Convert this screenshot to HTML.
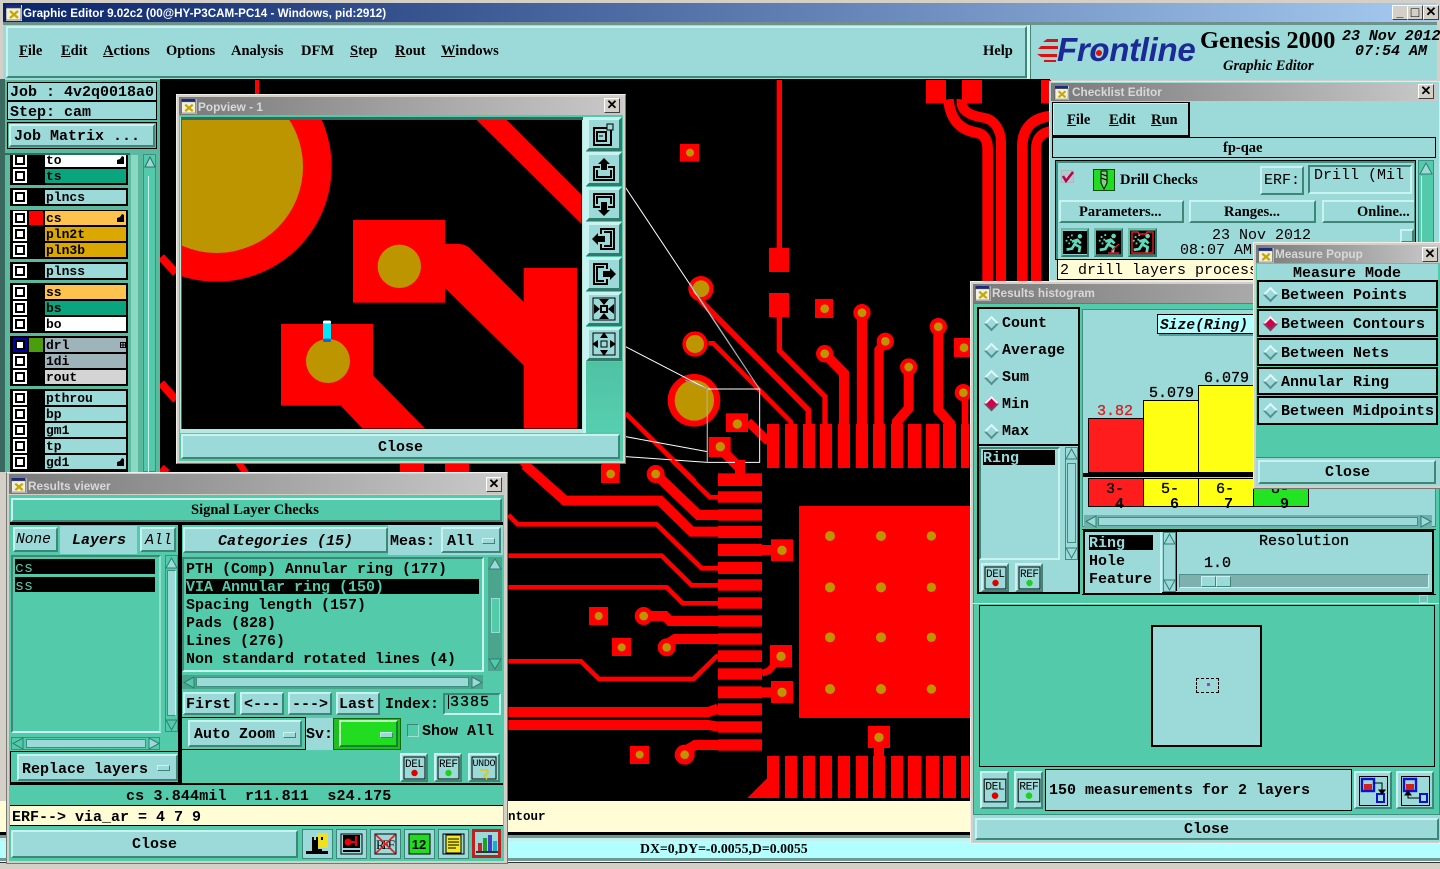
<!DOCTYPE html>
<html><head><meta charset="utf-8"><title>Graphic Editor</title>
<style>
html,body{margin:0;padding:0;width:1440px;height:869px;overflow:hidden;background:#d4d0c8}
div,span,svg{position:absolute;box-sizing:border-box}
.t,.m,.n,.s,.w{white-space:pre;line-height:1;color:#000;margin-top:1px}
.m{font:bold 15px/15px "Liberation Mono",monospace}
.n{font:15px/15px "Liberation Mono",monospace}
.s{font:bold 14.5px/15px "Liberation Serif",serif}
.i{font-style:italic}
span.ul{position:static;text-decoration:underline}
.w{font:bold 11.8px/12px "Liberation Sans",sans-serif;color:#d8d8d8}
.b{background:#9cd9d9;border:2px solid;border-color:#c9f3f0 #3f8578 #3f8578 #c9f3f0}
.f{background:#9cd9d9}
.g{background:#53cbab}
.k{background:#000}
.bar{background:linear-gradient(90deg,#7a7a7a,#c9c9c9)}
.win{background:#d4d0c8;border:1px solid #f0eee8;border-right-color:#777;border-bottom-color:#777}
.x{width:16px;height:15px;background:#d4d0c8;border:1px solid;border-color:#fff #404040 #404040 #fff;font:bold 13px/12px "Liberation Sans",sans-serif;text-align:center;color:#000}
.r{left:45px;width:81px;height:14px;font:bold 13px/16px "Liberation Mono",monospace;padding-left:1px;white-space:pre;overflow:hidden}
.grp{left:10px;width:118px;background:#000;border:1px solid #000}
.c{left:13px;width:14px;height:14px;background:#fff}
.c:after{content:"";position:absolute;box-sizing:border-box;left:2px;top:2px;width:10px;height:10px;border:2px solid #000;background:#fff}
.d{width:11px;height:11px;transform:rotate(45deg);background:#9cd9d9;border:2px solid;border-color:#e0f8f8 #56908e #56908e #e0f8f8}
.d.on{background:#d0004c;border-color:#f4f4f4 #7a4060 #7a4060 #f4f4f4}
.mr{left:1257px;width:181px;height:28px;background:#9cd9d9;border:2px solid #000}
</style></head><body>
<svg width="0" height="0" style="left:0;top:0"><defs>
<symbol id="wi" viewBox="0 0 16 16"><rect width="16" height="16" fill="#e8e8e8"/><rect x="0" y="0" width="15" height="3" fill="#1a2a80"/><rect x="0" y="3" width="15" height="12" fill="#f0f0e0" stroke="#444" stroke-width=".6"/><path d="M4 6l8 7M12 6l-8 7" stroke="#c8a800" stroke-width="2.4"/></symbol>
<symbol id="del" viewBox="0 0 28 30"><rect x="4" y="4" width="21" height="22" fill="none" stroke="#000"/><text x="14.5" y="14" font-family="Liberation Mono,monospace" font-size="11" text-anchor="middle" textLength="19">DEL</text><circle cx="14.5" cy="20" r="3.2" fill="#e00000"/></symbol>
<symbol id="ref" viewBox="0 0 28 30"><rect x="4" y="4" width="21" height="22" fill="none" stroke="#000"/><text x="14.5" y="14" font-family="Liberation Mono,monospace" font-size="11" text-anchor="middle" textLength="19">REF</text><circle cx="14.5" cy="20" r="3.2" fill="#20d020"/></symbol>
<symbol id="pbb" viewBox="0 0 36 34"><g stroke="none"><rect width="36" height="34" fill="#2f7a6a"/><path d="M0 0H36L33 3H3V31L0 34Z" fill="#c9f3f0"/><rect x="3" y="3" width="30" height="28" fill="#9cd9d9"/></g></symbol>
<symbol id="man" viewBox="0 0 27 26"><rect width="27" height="26" fill="#000"/><g fill="none" stroke="#62d8b8" stroke-width="3"><path d="M17 9l-4 6 6 3-1 6M13 15l-3 5-6 1M16 10l-6 2M16 10l4 4"/></g><circle cx="19" cy="6" r="2.5" fill="#62d8b8"/><path d="M5 6h2v2H5zM8 9h2v2H8zM3 10h2v2H3zM6 13h2v2H6zM9 4h2v2H9z" fill="#62d8b8"/></symbol>
</defs></svg>

<!-- top title -->
<div style="left:3px;top:3px;width:1434px;height:19px;background:linear-gradient(90deg,#0a246a,#a6caf0)"></div>
<svg style="left:6px;top:5px" width="16" height="16"><use href="#wi"/></svg>
<div class="w" style="left:23px;top:7px;color:#fff;font-size:11.65px">Graphic Editor 9.02c2 (00@HY-P3CAM-PC14 - Windows, pid:2912)</div>
<div class="x" style="left:1392px;top:5px;font-size:12px">_</div>
<div class="x" style="left:1407px;top:5px;font-size:14px">□</div>
<div class="x" style="left:1423px;top:5px">✕</div>
<div style="left:3px;top:22px;width:1434px;height:3px;background:#6f918c"></div>
<div style="left:3px;top:25px;width:1434px;height:55px;background:#9cd9d9"></div>
<div class="b" style="left:6px;top:26px;width:1021px;height:52px"></div>
<div style="left:1027px;top:25px;width:4px;height:54px;background:#d8f4f2;border-right:1px solid #3f8578"></div>
<div class="s" style="left:19px;top:43px"><span class="ul">F</span>ile</div>
<div class="s" style="left:61px;top:43px"><span class="ul">E</span>dit</div>
<div class="s" style="left:103px;top:43px"><span class="ul">A</span>ctions</div>
<div class="s" style="left:166px;top:43px">Options</div>
<div class="s" style="left:231px;top:43px">Analysis</div>
<div class="s" style="left:301px;top:43px">DFM</div>
<div class="s" style="left:350px;top:43px"><span class="ul">S</span>tep</div>
<div class="s" style="left:395px;top:43px"><span class="ul">R</span>out</div>
<div class="s" style="left:441px;top:43px"><span class="ul">W</span>indows</div>
<div class="s" style="left:983px;top:43px">Help</div>

<!-- logo -->
<svg style="left:1037px;top:38px" width="22" height="26"><path d="M10 1h11v3H6zM4 8h17v3H1zM0 16h20v3H4zM7 22h12v2H7z" fill="#e01010"/></svg>
<div style="left:1057px;top:33px;font:italic bold 33px/34px 'Liberation Sans',sans-serif;color:#1b2a96;white-space:pre;letter-spacing:-.3px">Frontline</div>
<div style="left:1096px;top:50px;width:6px;height:6px;background:#e01010;border-radius:3px"></div>
<div style="left:1200px;top:27px;font:bold 24.5px/28px 'Liberation Serif',serif;white-space:pre;color:#000">Genesis 2000</div>
<div class="s i" style="left:1223px;top:58px">Graphic Editor</div>
<div class="m i" style="left:1342px;top:28px;letter-spacing:-.05px">23 Nov 2012</div>
<div class="m i" style="left:1355px;top:43px">07:54 AM</div>

<!-- main canvas -->
<div class="k" style="left:160px;top:79px;width:890px;height:722px"></div>
<svg style="left:0;top:0" width="1440" height="869" fill="#f00">
<g stroke="#f00" fill="none">
<path d="M161 257L176 273M161 383L176 400M161 468L167 473" stroke-width="8"/>
</g>
<rect x="255" y="80" width="4" height="14"/>
<path d="M235 463h8l6 9h-8zM519 463h8l8 9h-8z"/>
<rect x="400" y="463" width="24" height="9"/><rect x="445" y="463" width="24" height="9"/><rect x="602" y="463" width="18" height="9"/>
<!-- zoom 9 -->
<g transform="translate(900,76) scale(.33333)">
<rect x="78" y="12" width="60" height="70"/><rect x="186" y="12" width="60" height="70"/><rect x="423" y="12" width="30" height="70"/>
<g fill="none" stroke="#f00">
<path d="M145 70C150 120 170 160 230 170C255 175 263 195 263 220L263 620" stroke-width="32"/>
<path d="M185 70C180 110 220 120 250 125C285 130 303 165 303 200L303 620" stroke-width="30"/>
<path d="M455 120C395 125 367 160 367 210L367 620" stroke-width="32"/>
<path d="M455 165C420 170 408 190 408 220L408 620" stroke-width="30"/>
</g></g>
<!-- zoom 7 -->
<g transform="translate(505,80) scale(.33333)">
<rect x="525" y="192" width="57" height="53"/>
<rect x="792" y="504" width="60" height="72"/><rect x="792" y="639" width="60" height="72"/><rect x="815" y="0" width="16" height="505"/>
<rect x="930" y="657" width="54" height="57"/><rect x="1347" y="774" width="50" height="57"/>
<rect x="663" y="1000" width="66" height="56"/><rect x="611" y="1071" width="66" height="60"/>
<g fill="none" stroke="#f00">
<path d="M823 711V812L960 950V1040" stroke-width="16"/>
<path d="M1071 698V1040" stroke-width="31"/>
<path d="M1141 784L1122 810V1040" stroke-width="28"/>
<path d="M1300 740V990L1335 1030V1040" stroke-width="30"/>
<path d="M1211 861V985L1176 1025V1040" stroke-width="30"/>
<path d="M959 821L1017 880V1040" stroke-width="30"/>
<path d="M1380 938V1040" stroke-width="20"/>
<path d="M585 660L910 990V1040" stroke-width="17"/>
<path d="M610 790H625L857 1025V1040" stroke-width="14"/>
<path d="M729 1025L790 1085" stroke-width="26"/>
<path d="M660 1120L705 1165V1190" stroke-width="30"/>
<path d="M362 1000L570 1205" stroke-width="14"/>
</g>
<g><circle cx="1071" cy="698" r="26"/><circle cx="1141" cy="784" r="26"/><circle cx="1300" cy="740" r="26"/><circle cx="1211" cy="861" r="26"/><circle cx="959" cy="821" r="26"/><circle cx="1375" cy="938" r="26"/><circle cx="588" cy="626" r="38"/><circle cx="570" cy="792" r="38"/><circle cx="567" cy="961" r="79"/></g>
<g><rect x="786" y="1032" width="36" height="132"/><rect x="840" y="1032" width="36" height="132"/><rect x="894" y="1032" width="36" height="132"/><rect x="945" y="1032" width="36" height="132"/><rect x="999" y="1032" width="36" height="132"/><rect x="1053" y="1032" width="36" height="132"/><rect x="1104" y="1032" width="36" height="132"/><rect x="1158" y="1032" width="36" height="132"/><rect x="1209" y="1032" width="40" height="132"/><rect x="1263" y="1032" width="40" height="132"/><rect x="1314" y="1032" width="39" height="132"/><rect x="1368" y="1032" width="24" height="132"/></g>
<g fill="#bd9500"><circle cx="555" cy="218" r="12"/><circle cx="959" cy="686" r="13"/><circle cx="1377" cy="803" r="13"/><circle cx="1071" cy="698" r="13"/><circle cx="1141" cy="784" r="13"/><circle cx="1300" cy="740" r="13"/><circle cx="1211" cy="861" r="13"/><circle cx="959" cy="821" r="13"/><circle cx="1375" cy="938" r="13"/><circle cx="588" cy="626" r="25"/><circle cx="570" cy="792" r="27"/><ellipse cx="568" cy="961" rx="59" ry="61"/><circle cx="697" cy="1032" r="14"/><circle cx="646" cy="1100" r="14"/></g>
<g fill="none" stroke="#fff" stroke-width="3"><path d="M362 323L762 925M362 800L607 927M362 1070L607 1115M362 1130L607 1147M607 927H764V1147H607Z"/></g>
<g fill="none" stroke="#999" stroke-width="3"><path d="M555 610L762 925M540 900L607 927V1147"/></g>
</g>
<!-- zoom 8 -->
<g transform="translate(505,460) scale(.33333)">
<g fill="none" stroke="#f00">
<path d="M60 15L180 122H465L560 215H640" stroke-width="30"/>
<path d="M452 42L580 165H640" stroke-width="30"/>
<path d="M10 165L38 193H455L590 325H640" stroke-width="14"/>
<path d="M10 287H470L560 376H640" stroke-width="14"/>
<path d="M10 382H485L533 430H640" stroke-width="14"/>
<path d="M500 0L615 112H640" stroke-width="14"/>
<path d="M705 0V40" stroke-width="30"/>
<path d="M416 468H480L495 483H640" stroke-width="30"/>
<path d="M490 550L510 537H640" stroke-width="30"/>
<path d="M10 604H228L282 657H565L639 585" stroke-width="14"/>
<path d="M10 756H610L639 746" stroke-width="30"/>
<path d="M10 795H610L639 800" stroke-width="30"/>
<path d="M545 870L570 855H640" stroke-width="30"/>
<path d="M771 640L792 632L828 590" stroke-width="20"/>
<path d="M771 270H800M771 697H800M1122 860V890" stroke-width="30"/>
</g>
<rect x="639" y="40" width="132" height="38"/><rect x="639" y="94" width="132" height="34"/><rect x="639" y="148" width="132" height="34"/><rect x="639" y="198" width="132" height="36"/><rect x="639" y="252" width="132" height="36"/><rect x="639" y="306" width="132" height="36"/><rect x="639" y="358" width="132" height="34"/><rect x="639" y="412" width="132" height="34"/><rect x="639" y="466" width="132" height="34"/><rect x="639" y="520" width="132" height="34"/><rect x="639" y="571" width="132" height="35"/><rect x="639" y="625" width="132" height="34"/><rect x="639" y="679" width="132" height="36"/><rect x="639" y="730" width="132" height="35"/><rect x="639" y="784" width="132" height="34"/><rect x="639" y="838" width="132" height="34"/>
<rect x="288" y="14" width="56" height="55"/><rect x="252" y="441" width="57" height="54"/><rect x="321" y="534" width="57" height="54"/><rect x="375" y="858" width="57" height="54"/>
<rect x="798" y="238" width="66" height="65"/><rect x="795" y="555" width="66" height="66"/><rect x="798" y="663" width="66" height="66"/><rect x="1089" y="798" width="66" height="66"/>
<rect x="882" y="138" width="515" height="636"/>
<circle cx="452" cy="42" r="27"/><circle cx="416" cy="468" r="27"/><circle cx="485" cy="562" r="27"/><circle cx="539" cy="884" r="30"/>
<g transform="translate(0,-144)"><rect x="786" y="1032" width="36" height="126"/><rect x="840" y="1032" width="36" height="126"/><rect x="894" y="1032" width="36" height="126"/><rect x="945" y="1032" width="36" height="126"/><rect x="999" y="1032" width="36" height="126"/><rect x="1053" y="1032" width="36" height="126"/><rect x="1104" y="1032" width="36" height="126"/><rect x="1158" y="1032" width="36" height="126"/><rect x="1209" y="1032" width="40" height="126"/><rect x="1263" y="1032" width="40" height="126"/><rect x="1314" y="1032" width="39" height="126"/><rect x="1368" y="1032" width="24" height="126"/></g>
<path d="M727 1014L786 955V1014Z"/>
<g fill="#bd9500"><circle cx="317" cy="42" r="13"/><circle cx="452" cy="42" r="13"/><circle cx="281" cy="468" r="12"/><circle cx="416" cy="468" r="13"/><circle cx="350" cy="562" r="12"/><circle cx="485" cy="562" r="13"/><circle cx="404" cy="884" r="12"/><circle cx="539" cy="884" r="13"/><circle cx="831" cy="271" r="14"/><circle cx="828" cy="589" r="14"/><circle cx="831" cy="697" r="14"/><circle cx="1122" cy="832" r="14"/>
<circle cx="975" cy="228" r="15"/><circle cx="1128" cy="228" r="15"/><circle cx="1279" cy="228" r="14"/><circle cx="975" cy="382" r="15"/><circle cx="1128" cy="382" r="15"/><circle cx="1279" cy="382" r="14"/><circle cx="975" cy="532" r="15"/><circle cx="1128" cy="532" r="15"/><circle cx="1279" cy="532" r="14"/><circle cx="975" cy="687" r="15"/><circle cx="1128" cy="687" r="15"/><circle cx="1279" cy="687" r="14"/></g>
</g>
</svg>

<!-- bottom bars -->
<div style="left:0;top:801px;width:1440px;height:31px;background:#fffcd6"></div>
<div class="t" style="left:508px;top:809px;font:bold 12.5px/14px 'Liberation Mono',monospace">ntour</div>
<div class="k" style="left:0;top:832px;width:1440px;height:3px"></div>
<div style="left:0;top:835px;width:1440px;height:3px;background:#6f9a94"></div>
<div style="left:0;top:838px;width:1440px;height:3px;background:#c6f0ee"></div>
<div style="left:0;top:841px;width:1440px;height:17px;background:#b3ffff"></div>
<div style="left:0;top:858px;width:1440px;height:3px;background:#6f9a94"></div>
<div style="left:0;top:861px;width:1440px;height:1px;background:#fff"></div>
<div style="left:0;top:862px;width:1440px;height:1px;background:#333"></div>
<div style="left:0;top:863px;width:1440px;height:6px;background:#d4d0c8"></div>
<div class="s" style="left:640px;top:840px;font-size:13.8px">DX=0,DY=-0.0055,D=0.0055</div>

<!-- left panel -->
<div style="left:0;top:79px;width:5px;height:393px;background:#39695f"></div>
<div class="g" style="left:5px;top:80px;width:155px;height:392px;background:#5ab99e"></div>
<div style="left:131px;top:155px;width:7px;height:317px;background:#8ad8c2"></div>
<div class="g" style="left:143px;top:154px;width:13px;height:318px;border:1px solid #3f8f80"></div>
<div style="left:148px;top:176px;width:1px;height:296px;background:#c9f3f0"></div>
<svg style="left:144px;top:156px" width="12" height="12"><path d="M6 1L1 11H11Z" fill="#9cd9d9" stroke="#2f6f60"/></svg>

<div class="grp" style="top:155px;height:30px"></div>
<div class="c" style="top:153px"></div><div class="r" style="top:155px;height:12px;line-height:12px;background:#fff">to</div>
<div class="c" style="top:169px"></div><div class="r" style="top:169px;background:#0aa57e">ts</div>
<svg style="left:116px;top:156px" width="9" height="9"><path d="M1 8V4L4 3 6 0 8 1V8Z"/></svg>
<div class="grp" style="top:188px;height:18px"></div>
<div class="c" style="top:190px"></div><div class="r" style="top:190px;background:#9cd9d9">plncs</div>
<div class="grp" style="top:210px;height:49px"></div>
<div class="c" style="top:211px"></div><div style="left:29px;top:211px;width:14px;height:14px;background:#f00"></div><div class="r" style="top:211px;background:#fec24e">cs</div>
<svg style="left:116px;top:214px" width="9" height="9"><path d="M1 8V4L4 3 6 0 8 1V8Z"/></svg>
<div class="c" style="top:227px"></div><div class="r" style="top:227px;background:#daa800">pln2t</div>
<div class="c" style="top:243px"></div><div class="r" style="top:243px;background:#daa800">pln3b</div>
<div class="grp" style="top:262px;height:18px"></div>
<div class="c" style="top:264px"></div><div class="r" style="top:264px;background:#9cd9d9">plnss</div>
<div class="grp" style="top:283px;height:50px"></div>
<div class="c" style="top:285px"></div><div class="r" style="top:285px;background:#fec24e">ss</div>
<div class="c" style="top:301px"></div><div class="r" style="top:301px;background:#0aa57e">bs</div>
<div class="c" style="top:317px"></div><div class="r" style="top:317px;background:#fff">bo</div>
<div class="grp" style="top:336px;height:50px"></div>
<div class="c" style="top:338px;background:#0000b0"></div><div style="left:29px;top:338px;width:14px;height:14px;background:#4a9e0e"></div><div class="r" style="top:338px;background:#9fb4ba">drl</div>
<svg style="left:120px;top:342px" width="6" height="6"><path d="M.5.5h5v5h-5zM3 0v6M0 3h6" fill="none" stroke="#000"/></svg>
<div class="c" style="top:354px"></div><div class="r" style="top:354px;background:#9fb4ba">1di</div>
<div class="c" style="top:370px"></div><div class="r" style="top:370px;background:#d4d4d4">rout</div>
<div class="grp" style="top:389px;height:83px"></div>
<div class="c" style="top:391px"></div><div class="r" style="top:391px;background:#9cd9d9">pthrou</div>
<div class="c" style="top:407px"></div><div class="r" style="top:407px;background:#9cd9d9">bp</div>
<div class="c" style="top:423px"></div><div class="r" style="top:423px;background:#9cd9d9">gm1</div>
<div class="c" style="top:439px"></div><div class="r" style="top:439px;background:#9cd9d9">tp</div>
<div class="c" style="top:455px"></div><div class="r" style="top:455px;background:#9cd9d9">gd1</div>
<svg style="left:116px;top:458px" width="9" height="9"><path d="M1 8V4L4 3 6 0 8 1V8Z"/></svg>
<div style="left:5px;top:149px;width:125px;height:6px;background:#5ab99e;border-bottom:2px solid #2f6f60"></div>
<div class="f" style="left:7px;top:82px;width:150px;height:19px;border:1px solid #000"></div>
<div class="m" style="left:10px;top:84px">Job : 4v2q0018a0</div>
<div class="f" style="left:7px;top:101px;width:150px;height:19px;border:1px solid #000"></div>
<div class="m" style="left:10px;top:104px">Step: cam</div>
<div class="b" style="left:9px;top:124px;width:146px;height:23px"></div>
<div class="m" style="left:14px;top:128px">Job Matrix ...</div>
<div style="left:7px;top:122px;width:150px;height:27px;border:1px solid #000"></div>

<!-- Popview -->
<div class="win" style="left:176px;top:94px;width:450px;height:370px"></div>
<div class="bar" style="left:179px;top:97px;width:444px;height:18px"></div>
<svg style="left:181px;top:99px" width="16" height="15"><use href="#wi"/></svg>
<div class="w" style="left:198px;top:100px">Popview - 1</div>
<div class="x" style="left:604px;top:98px">✕</div>
<div class="g" style="left:179px;top:115px;width:444px;height:346px"></div>
<div style="left:180px;top:117px;width:406px;height:316px;background:#b5e8de"></div>
<div style="left:181px;top:117px;width:404px;height:3px;background:#2f6f60"></div>
<div style="left:181px;top:117px;width:1px;height:312px;background:#2f6f60"></div>
<svg style="left:182px;top:120px" width="400" height="309" viewBox="182 120 400 309">
<rect x="182" y="120" width="400" height="309" fill="#000"/>
<g transform="translate(175,90) scale(.33333)" fill="#f00">
<circle cx="125" cy="230" r="345"/><circle cx="125" cy="230" r="259" fill="#bd9500"/>
<path d="M905 90H995L1220 315V402Z"/>
<rect x="534" y="390" width="276" height="248"/>
<path d="M810 462H850Q875 462 890 480L1046 636V534H1206V1015H1046V826L810 594Z"/>
<circle cx="673" cy="529" r="65" fill="#bd9500"/>
<rect x="318" y="702" width="276" height="245"/>
<path d="M594 856L750 1015H562L497 947Z"/>
<circle cx="459" cy="813" r="66" fill="#bd9500"/>
<rect x="444" y="692" width="24" height="62" rx="6" fill="#00e8f8"/>
<rect x="444" y="692" width="24" height="8" rx="4" fill="#fff"/>
<rect x="444" y="746" width="24" height="10" rx="4" fill="#2060d0"/>
</g></svg>
<div style="left:583px;top:117px;width:3px;height:316px;background:#c9f3f0"></div>
<div style="left:586px;top:362px;width:36px;height:70px;background:linear-gradient(#4fc2a4,#57cfaf)"></div>
<svg style="left:586px;top:117px" width="36" height="246" fill="none" stroke="#000" stroke-width="2">
<use href="#pbb" width="36" height="34"/><use href="#pbb" y="35" width="36" height="34"/><use href="#pbb" y="70" width="36" height="34"/><use href="#pbb" y="105" width="36" height="34"/><use href="#pbb" y="140" width="36" height="34"/><use href="#pbb" y="175" width="36" height="34"/><use href="#pbb" y="210" width="36" height="34"/>
<g><rect x="8" y="11" width="17" height="17" stroke-width="2"/><rect x="11" y="15" width="9" height="9" stroke-width="2"/><rect x="21" y="7" width="6" height="6" stroke-width="1" fill="#9cd9d9"/><path d="M13 19h4" stroke-width="1"/></g>
<g transform="translate(0,35)"><path d="M14 15H8v13h20V15h-6"/><path d="M11 18v7h14v-7"/><path d="M18 6l6 6h-3v6h-6v-6h-3z" fill="#000" stroke="none"/></g>
<g transform="translate(0,70)"><path d="M14 20H8V7h20v13h-6"/><path d="M11 17v-7h14v7"/><path d="M18 29l-6-6h3v-8h6v8h3z" fill="#000" stroke="none"/></g>
<g transform="translate(0,105)"><path d="M15 12V7h13v20H15v-5"/><path d="M18 10h7v14h-7"/><path d="M6 17l6-6v3h7v6h-7v3z" fill="#000" stroke="none"/></g>
<g transform="translate(0,140)"><path d="M21 12V7H8v20h13v-5"/><path d="M18 10h-7v14h7"/><path d="M30 17l-6-6v3h-7v6h7v3z" fill="#000" stroke="none"/></g>
<g transform="translate(0,175)"><rect x="7" y="6" width="22" height="22" stroke-width="1"/><rect x="15" y="14" width="6" height="6"/><path d="M18 13l-5-6h10zM18 21l-5 6h10zM14 17l-6-5v10zM22 17l6-5v10z" fill="#000" stroke="none"/></g>
<g transform="translate(0,210)"><rect x="7" y="6" width="22" height="22" stroke-width="1"/><rect x="15" y="14" width="6" height="6" stroke-width="1"/><path d="M18 5l-4 6h8zM18 29l-4-6h8zM6 17l6-4v8zM30 17l-6-4v8z" fill="#000" stroke="none"/></g>
</svg>
<div class="b" style="left:181px;top:434px;width:439px;height:25px"></div>
<div class="m" style="left:378px;top:439px">Close</div>

<!-- Results viewer -->
<div style="left:6px;top:472px;width:502px;height:392px;background:#d4d0c8;border:1px solid #777;border-top-color:#f0f0f0"></div>
<div class="bar" style="left:9px;top:474px;width:496px;height:20px"></div>
<svg style="left:11px;top:478px" width="16" height="15"><use href="#wi"/></svg>
<div class="w" style="left:28px;top:479px">Results viewer</div>
<div class="x" style="left:486px;top:477px">✕</div>
<div class="g" style="left:9px;top:495px;width:495px;height:366px"></div>
<div class="g" style="left:11px;top:498px;width:491px;height:24px;border:2px solid;border-color:#c9f3f0 #3f8578 #3f8578 #c9f3f0"></div>
<div class="s" style="left:191px;top:502px">Signal Layer Checks</div>
<div class="k" style="left:10px;top:522px;width:493px;height:3px"></div>
<div class="b" style="left:13px;top:527px;width:45px;height:25px"></div><div class="n i" style="left:16px;top:532px;font-size:14.5px">None</div>
<div class="f" style="left:60px;top:526px;width:77px;height:28px"></div><div class="m i" style="left:72px;top:532px">Layers</div>
<div class="b" style="left:140px;top:527px;width:36px;height:25px"></div><div class="n i" style="left:145px;top:532px">All</div>
<div class="k" style="left:178px;top:525px;width:4px;height:258px"></div>
<div class="b" style="left:183px;top:527px;width:205px;height:26px"></div><div class="m i" style="left:218px;top:533px">Categories (15)</div>
<div class="f" style="left:388px;top:525px;width:115px;height:30px"></div>
<div class="m" style="left:390px;top:533px">Meas:</div>
<div class="b" style="left:441px;top:527px;width:60px;height:26px"></div><div class="m" style="left:447px;top:533px">All</div>
<div class="b" style="left:482px;top:538px;width:13px;height:6px;border-width:1px"></div>
<!-- layers list -->
<div style="left:11px;top:555px;width:150px;height:178px;border:2px solid;border-color:#3f8578 #8fe0cc #c9f3f0 #3f8578"></div>
<div class="k" style="left:15px;top:559px;width:140px;height:15px"></div><div class="n" style="left:15px;top:560px;color:#53cbab">cs</div>
<div class="k" style="left:15px;top:577px;width:140px;height:15px"></div><div class="n" style="left:15px;top:578px;color:#53cbab">ss</div>
<div style="left:165px;top:555px;width:13px;height:177px;border:1px solid #3f8f80"></div>
<div style="left:167px;top:570px;width:9px;height:146px;border:1px solid #3f8f80;background:#9cd9d9;border-right-color:#c9f3f0"></div>
<svg style="left:165px;top:556px" width="13" height="176"><path d="M6.5 2L1 12H12Z" fill="#9cd9d9" stroke="#2f7f70"/><path d="M6.5 174L1 164H12Z" fill="#53cbab" stroke="#2f7f70"/></svg>
<div style="left:11px;top:737px;width:149px;height:13px;border:1px solid #3f8f80"></div>
<div style="left:26px;top:739px;width:120px;height:9px;background:#9cd9d9;border:1px solid #3f8f80"></div>
<svg style="left:12px;top:737px" width="148" height="13"><path d="M1 6.5L11 1V12Z" fill="#53cbab" stroke="#2f7f70"/><path d="M147 6.5L137 1V12Z" fill="#9cd9d9" stroke="#2f7f70"/></svg>
<div class="k" style="left:10px;top:751px;width:170px;height:33px"></div>
<div class="g" style="left:11px;top:752px;width:167px;height:30px"></div>
<div class="b" style="left:17px;top:754px;width:161px;height:27px"></div>
<div class="m" style="left:22px;top:761px">Replace layers</div>
<div class="b" style="left:157px;top:765px;width:13px;height:6px;border-width:1px"></div>
<!-- categories -->
<div style="left:182px;top:557px;width:302px;height:115px;border:2px solid;border-color:#3f8578 #c9f3f0 #c9f3f0 #3f8578"></div>
<div class="m" style="left:186px;top:561px">PTH (Comp) Annular ring (177)</div>
<div class="k" style="left:186px;top:579px;width:293px;height:15px"></div>
<div class="m" style="left:186px;top:579px;color:#53cbab">VIA Annular ring (150)</div>
<div class="m" style="left:186px;top:597px">Spacing length (157)</div>
<div class="m" style="left:186px;top:615px">Pads (828)</div>
<div class="m" style="left:186px;top:633px">Lines (276)</div>
<div class="m" style="left:186px;top:651px">Non standard rotated lines (4)</div>
<div style="left:488px;top:557px;width:14px;height:114px;background:#4aa58c"></div>
<div style="left:491px;top:598px;width:9px;height:35px;background:#53cbab;border:1px solid #9cd9d9"></div>
<svg style="left:488px;top:557px" width="14" height="114"><path d="M7 2L1 12H13Z" fill="#9cd9d9" stroke="#2f7f70"/><path d="M7 112L1 102H13Z" fill="#53cbab" stroke="#2f7f70"/></svg>
<div style="left:182px;top:675px;width:301px;height:14px;background:#4aa58c"></div>
<div style="left:196px;top:677px;width:273px;height:10px;background:#9cd9d9;border:1px solid #3f8f80"></div>
<svg style="left:183px;top:676px" width="300" height="13"><path d="M1 6.5L11 1V12Z" fill="#53cbab" stroke="#2f7f70"/><path d="M299 6.5L289 1V12Z" fill="#9cd9d9" stroke="#2f7f70"/></svg>
<div class="b" style="left:183px;top:692px;width:53px;height:23px"></div><div class="m" style="left:186px;top:696px">First</div>
<div class="b" style="left:240px;top:692px;width:44px;height:23px"></div><div class="m" style="left:244px;top:696px">&lt;---</div>
<div class="b" style="left:288px;top:692px;width:44px;height:23px"></div><div class="m" style="left:292px;top:696px">---&gt;</div>
<div class="b" style="left:336px;top:692px;width:44px;height:23px"></div><div class="m" style="left:339px;top:696px">Last</div>
<div class="m" style="left:385px;top:696px">Index:</div>
<div style="left:443px;top:693px;width:58px;height:22px;border:2px solid;border-color:#3f8578 #c9f3f0 #c9f3f0 #3f8578"></div>
<div class="n" style="left:450px;top:694px;letter-spacing:1px;-webkit-text-stroke:.3px #000">3385</div>
<div class="k" style="left:448px;top:695px;width:1px;height:14px"></div>
<div class="k" style="left:181px;top:717px;width:125px;height:33px"></div>
<div class="g" style="left:182px;top:718px;width:123px;height:31px"></div>
<div class="b" style="left:188px;top:720px;width:114px;height:27px"></div>
<div class="m" style="left:194px;top:726px">Auto Zoom</div>
<div class="b" style="left:283px;top:732px;width:13px;height:6px;border-width:1px"></div>
<div class="f" style="left:306px;top:718px;width:27px;height:32px"></div>
<div class="m" style="left:306px;top:726px">Sv:</div>
<div style="left:333px;top:718px;width:68px;height:32px;background:#1fbf1f;border:1px solid #0d6d0d"></div>
<div style="left:339px;top:720px;width:59px;height:27px;background:#22dc22;border:2px solid;border-color:#b8f3b8 #157f30 #157f30 #b8f3b8"></div>
<div class="b" style="left:380px;top:732px;width:13px;height:6px;border-width:1px"></div>
<div style="left:407px;top:724px;width:12px;height:13px;border:1px solid #3f8578;border-right-color:#9ce4d2;border-bottom-color:#9ce4d2"></div>
<div class="m" style="left:422px;top:723px">Show All</div>
<div class="b" style="left:400px;top:753px;width:28px;height:29px"></div><svg style="left:400px;top:753px" width="28" height="30"><use href="#del"/></svg>
<div class="b" style="left:434px;top:753px;width:28px;height:29px"></div><svg style="left:434px;top:753px" width="28" height="30"><use href="#ref"/></svg>
<div class="b" style="left:468px;top:753px;width:32px;height:29px"></div>
<svg style="left:468px;top:753px" width="32" height="30"><rect x="4" y="4" width="24" height="22" fill="none" stroke="#000"/><text x="16" y="13" font-family="Liberation Mono,monospace" font-size="10" text-anchor="middle" textLength="23">UNDO</text><path d="M12 17h7q2 2 0 4l-3 2 3 3" fill="none" stroke="#e8c800" stroke-width="1.6"/></svg>
<div class="k" style="left:10px;top:783px;width:493px;height:2px"></div>
<div class="m" style="left:126px;top:788px;letter-spacing:.15px">cs 3.844mil  r11.811  s24.175</div>
<div class="k" style="left:10px;top:805px;width:493px;height:1px"></div>
<div style="left:10px;top:806px;width:493px;height:20px;background:#fffcd6;border-bottom:1px solid #000"></div>
<div class="m" style="left:12px;top:809px">ERF--&gt; via_ar = 4 7 9</div>
<div class="b" style="left:11px;top:830px;width:287px;height:28px"></div>
<div class="m" style="left:132px;top:836px">Close</div>
<svg style="left:302px;top:829px" width="200" height="31">
<g fill="#9cd9d9" stroke="#3f8578"><rect x=".5" y=".5" width="30" height="29"/><rect x="34.5" y=".5" width="30" height="29"/><rect x="68.5" y=".5" width="30" height="29"/><rect x="102.5" y=".5" width="30" height="29"/><rect x="136.5" y=".5" width="30" height="29"/></g>
<rect x="4" y="4" width="22" height="16" fill="#9cd9d9"/><rect x="15" y="4" width="11" height="15" fill="#f0e020"/><path d="M4 22h22v3H4zM10 20h10v2H10zM10 8h6v12h-6z"/><rect x="12" y="8" width="2" height="3" fill="#9cd9d9"/><rect x="19" y="8" width="2" height="3"/>
<rect x="39" y="5" width="21" height="20" fill="none" stroke="#000"/><rect x="41" y="6" width="17" height="13" fill="#000"/><circle cx="46" cy="13" r="3.5" fill="#e00"/><path d="M49 13h4M54 7v10" stroke="#e00" stroke-width="2"/><path d="M41 22h17" stroke="#000" stroke-width="2"/>
<rect x="73" y="5" width="21" height="20" fill="none" stroke="#000"/><text x="83.5" y="20" font-family="Liberation Serif,serif" font-size="13" text-anchor="middle" textLength="19">REF</text><path d="M74 6l19 18M93 6L74 24" stroke="#e02020" stroke-width="1.6"/>
<rect x="107" y="5" width="21" height="20" fill="#22dc22" stroke="#000"/><text x="117" y="20" font-family="Liberation Sans,sans-serif" font-size="13" font-weight="bold" text-anchor="middle">12</text>
<rect x="141" y="5" width="21" height="20" fill="none" stroke="#000"/><rect x="144" y="6" width="15" height="18" fill="#f4e820" stroke="#000"/><path d="M146 10h11M146 13h11M146 16h11M146 19h8" stroke="#000"/>
<rect x="171.5" y="1.5" width="26" height="26" fill="#9cd9d9" stroke="#c02020" stroke-width="3"/><rect x="176" y="14" width="4" height="8" fill="#d02020"/><rect x="181" y="9" width="4" height="13" fill="#20a020"/><rect x="186" y="6" width="4" height="16" fill="#4040d0"/><rect x="191" y="12" width="4" height="10" fill="#10b0d0"/><path d="M174 23h22" stroke="#000" stroke-width="1.5"/>
</svg>

<!-- Checklist editor -->
<div class="f" style="left:1049px;top:81px;width:391px;height:200px;border:1px solid #e8e8e0"></div>
<div class="bar" style="left:1051px;top:83px;width:387px;height:18px"></div>
<svg style="left:1054px;top:86px" width="16" height="14"><use href="#wi"/></svg>
<div class="w" style="left:1072px;top:85px">Checklist Editor</div>
<div class="x" style="left:1418px;top:84px">✕</div>
<div style="left:1052px;top:102px;width:138px;height:35px;border:1px solid #000;border-right-width:2px;border-bottom-width:2px;box-shadow:inset 1px 1px 0 #c9f3f0"></div>
<div class="s" style="left:1067px;top:112px"><span class="ul">F</span>ile</div>
<div class="s" style="left:1109px;top:112px"><span class="ul">E</span>dit</div>
<div class="s" style="left:1151px;top:112px"><span class="ul">R</span>un</div>
<div style="left:1052px;top:137px;width:384px;height:21px;border:1px solid #000"></div>
<div class="s" style="left:1223px;top:140px">fp-qae</div>
<div class="g" style="left:1055px;top:160px;width:361px;height:100px;border:1px solid #000;background:#3f8f80"></div>
<div class="f" style="left:1058px;top:163px;width:356px;height:97px"></div>
<div style="left:1061px;top:170px;width:13px;height:13px;background:#b8c8cc;border:1px solid #a0c0c0"></div>
<svg style="left:1061px;top:170px" width="14" height="13"><path d="M2 6l3 5 7-9" fill="none" stroke="#b8004c" stroke-width="2.5"/></svg>
<div style="left:1093px;top:169px;width:22px;height:22px;background:#22dc22;border:1px solid #0a4a0a"></div>
<svg style="left:1093px;top:169px" width="22" height="22"><path d="M8 2h6v12l-3 6-3-6z" fill="#80d080" stroke="#000"/><path d="M8 5l6 2M8 9l6 2" stroke="#000"/></svg>
<div class="s" style="left:1120px;top:172px">Drill Checks</div>
<div class="b" style="left:1260px;top:166px;width:44px;height:29px"></div>
<div class="n" style="left:1264px;top:172px">ERF:</div>
<div style="left:1308px;top:165px;width:104px;height:29px;border:2px solid;border-color:#3f8578 #c9f3f0 #c9f3f0 #3f8578"></div>
<div class="n" style="left:1314px;top:167px">Drill (Mil</div>
<div class="b" style="left:1059px;top:200px;width:125px;height:23px"></div><div class="s" style="left:1079px;top:204px">Parameters...</div>
<div class="b" style="left:1189px;top:200px;width:127px;height:23px"></div><div class="s" style="left:1224px;top:204px">Ranges...</div>
<div class="b" style="left:1322px;top:200px;width:92px;height:23px;border-right:0"></div><div class="s" style="left:1357px;top:204px">Online...</div>
<div style="left:1061px;top:228px;width:28px;height:29px;border:2px solid;border-color:#62c0a8 #2f7a6a #2f7a6a #62c0a8"></div>
<div style="left:1094px;top:228px;width:29px;height:29px;border:2px solid;border-color:#62c0a8 #2f7a6a #2f7a6a #62c0a8"></div>
<div style="left:1128px;top:228px;width:29px;height:29px;border:2px solid;border-color:#62c0a8 #2f7a6a #2f7a6a #62c0a8"></div>
<svg style="left:1063px;top:230px" width="24" height="25"><use href="#man"/></svg>
<svg style="left:1096px;top:230px" width="25" height="25"><use href="#man"/><path d="M15 21l8-7M12 23h11" stroke="#e02020" stroke-width="1.4" fill="none"/></svg>
<svg style="left:1130px;top:230px" width="25" height="25"><use href="#man"/><path d="M2 2h6l1 2h7l1-2h6v21H2z" fill="none" stroke="#e02020" stroke-width="1.4"/></svg>
<div class="n" style="left:1212px;top:227px">23 Nov 2012</div>
<div class="n" style="left:1180px;top:242px">08:07 AM</div>
<div class="b" style="left:1400px;top:229px;width:14px;height:14px"></div>
<div style="left:1418px;top:160px;width:16px;height:121px;background:#53cbab;border:1px solid #3f8f80"></div>
<div style="left:1421px;top:176px;width:9px;height:105px;background:#53cbab;border-left:1px solid #c9f3f0"></div>
<svg style="left:1419px;top:162px" width="14" height="14"><path d="M7 1L1 12H13Z" fill="#9cd9d9" stroke="#2f7f70"/></svg>
<div style="left:1057px;top:259px;width:360px;height:21px;background:#fffcd6;border:1px solid #000"></div>
<div class="n" style="left:1060px;top:262px">2 drill layers process</div>

<!-- Results histogram -->
<div style="left:970px;top:281px;width:470px;height:563px;background:#d4d0c8;border:1px solid #f0eee8"></div>
<div class="bar" style="left:973px;top:284px;width:467px;height:19px"></div>
<svg style="left:975px;top:286px" width="16" height="15"><use href="#wi"/></svg>
<div class="w" style="left:992px;top:286px;color:#d8d8d8">Results histogram</div>
<div class="g" style="left:973px;top:303px;width:467px;height:512px;border:1px solid #3f8f80"></div>
<div class="f" style="left:977px;top:307px;width:103px;height:287px;border:2px solid #000"></div>
<div class="k" style="left:977px;top:444px;width:103px;height:2px"></div>
<div class="d" style="left:986px;top:318px"></div><div class="m" style="left:1002px;top:315px">Count</div>
<div class="d" style="left:986px;top:345px"></div><div class="m" style="left:1002px;top:342px">Average</div>
<div class="d" style="left:986px;top:372px"></div><div class="m" style="left:1002px;top:369px">Sum</div>
<div class="d on" style="left:986px;top:398px"></div><div class="m" style="left:1002px;top:396px">Min</div>
<div class="d" style="left:986px;top:426px"></div><div class="m" style="left:1002px;top:423px">Max</div>
<div style="left:979px;top:447px;width:81px;height:113px;border:2px solid;border-color:#3f8578 #c9f3f0 #c9f3f0 #3f8578"></div>
<div class="k" style="left:983px;top:450px;width:72px;height:15px"></div>
<div class="m" style="left:983px;top:450px;color:#9cd9d9">Ring</div>
<div style="left:1065px;top:447px;width:13px;height:113px;border:1px solid #3f8f80"></div>
<div style="left:1067px;top:463px;width:9px;height:80px;border:1px solid #3f8f80"></div>
<svg style="left:1065px;top:447px" width="13" height="113"><path d="M6.5 2L1 12H12Z" fill="#9cd9d9" stroke="#2f7f70"/><path d="M6.5 111L1 101H12Z" fill="#9cd9d9" stroke="#2f7f70"/></svg>
<div class="b" style="left:981px;top:563px;width:28px;height:29px"></div><svg style="left:981px;top:563px" width="28" height="30"><use href="#del"/></svg>
<div class="b" style="left:1015px;top:563px;width:28px;height:29px"></div><svg style="left:1015px;top:563px" width="28" height="30"><use href="#ref"/></svg>
<!-- chart -->
<div class="f" style="left:1082px;top:309px;width:354px;height:218px;border:1px solid #3f8f80"></div>
<div style="left:1157px;top:314px;width:100px;height:20px;background:#b3ffff;border:1px solid #000;box-shadow:2px 2px 0 #5a9a9a"></div>
<div class="m i" style="left:1160px;top:318px;font-size:14.5px;letter-spacing:.1px">Size(Ring)</div>
<div style="left:1088px;top:418px;width:56px;height:55px;background:#ff1c1c;border:1px solid #000"></div>
<div style="left:1143px;top:400px;width:56px;height:73px;background:#ffff14;border:1px solid #000"></div>
<div style="left:1198px;top:385px;width:56px;height:88px;background:#ffff14;border:1px solid #000"></div>
<div class="k" style="left:1083px;top:473px;width:172px;height:4px"></div>
<div class="m" style="left:1097px;top:403px;color:#d82020;font-weight:normal;-webkit-text-stroke:.3px #d82020">3.82</div>
<div class="n" style="left:1149px;top:385px;-webkit-text-stroke:.3px #000">5.079</div>
<div class="n" style="left:1204px;top:370px;-webkit-text-stroke:.3px #000">6.079</div>
<div style="left:1088px;top:478px;width:56px;height:29px;background:#ff1c1c;border:1px solid #000"></div>
<div style="left:1143px;top:478px;width:56px;height:29px;background:#ffff14;border:1px solid #000"></div>
<div style="left:1198px;top:478px;width:56px;height:29px;background:#ffff14;border:1px solid #000"></div>
<div style="left:1253px;top:478px;width:56px;height:29px;background:#22e422;border:1px solid #000"></div>
<div class="n" style="left:1106px;top:481px;-webkit-text-stroke:.3px #000">3-</div><div class="m" style="left:1115px;top:496px">4</div>
<div class="n" style="left:1161px;top:481px;-webkit-text-stroke:.3px #000">5-</div><div class="m" style="left:1170px;top:496px">6</div>
<div class="n" style="left:1216px;top:481px;-webkit-text-stroke:.3px #000">6-</div><div class="m" style="left:1224px;top:496px">7</div>
<div class="n" style="left:1271px;top:481px;-webkit-text-stroke:.3px #000">8-</div><div class="m" style="left:1280px;top:496px">9</div>
<div style="left:1084px;top:515px;width:348px;height:13px;background:#6fb0ac"></div>
<div style="left:1098px;top:517px;width:320px;height:9px;background:#9cd9d9;border:1px solid #3f8f80"></div>
<svg style="left:1085px;top:515px" width="347" height="13"><path d="M1 6.5L11 1V12Z" fill="#9cd9d9" stroke="#2f7f70"/><path d="M346 6.5L336 1V12Z" fill="#9cd9d9" stroke="#2f7f70"/></svg>
<div class="k" style="left:1082px;top:529px;width:354px;height:1px"></div>
<div class="f" style="left:1083px;top:530px;width:351px;height:64px;border:2px solid #000"></div>
<div style="left:1085px;top:532px;width:77px;height:61px;border-right:2px solid #c9f3f0;background:#9cd9d9"></div>
<div class="k" style="left:1089px;top:535px;width:64px;height:15px"></div>
<div class="m" style="left:1089px;top:535px;color:#9cd9d9">Ring</div>
<div class="m" style="left:1089px;top:553px">Hole</div>
<div class="m" style="left:1089px;top:571px">Feature</div>
<div style="left:1163px;top:532px;width:13px;height:60px;border:1px solid #3f8f80"></div>
<svg style="left:1163px;top:532px" width="13" height="60"><path d="M6.5 2L1 12H12Z" fill="#9cd9d9" stroke="#2f7f70"/><path d="M6.5 58L1 48H12Z" fill="#9cd9d9" stroke="#2f7f70"/></svg>
<div class="k" style="left:1176px;top:531px;width:1px;height:60px"></div>
<div class="m" style="left:1259px;top:533px;font-weight:normal;-webkit-text-stroke:.3px #000">Resolution</div>
<div class="m" style="left:1204px;top:555px;font-weight:normal;-webkit-text-stroke:.3px #000">1.0</div>
<div style="left:1179px;top:574px;width:250px;height:14px;background:#7fb0b0;border:1px solid #4f8f8a;border-bottom-color:#c9f3f0;border-right-color:#c9f3f0"></div>
<div class="b" style="left:1201px;top:576px;width:15px;height:11px;border-width:1px"></div>
<div class="b" style="left:1216px;top:576px;width:15px;height:11px;border-width:1px"></div>
<div class="k" style="left:1082px;top:594px;width:354px;height:1px"></div>
<div style="left:1419px;top:595px;width:9px;height:8px;background:#6fc4b4;border:1px solid #9cd9d9"></div>
<!-- lower map -->
<div style="left:973px;top:603px;width:466px;height:1px;background:#c9f3f0"></div>
<div class="g" style="left:979px;top:605px;width:456px;height:162px;border:1px solid #000"></div>
<div class="f" style="left:1151px;top:625px;width:111px;height:122px;border:2px solid #000"></div>
<div style="left:1196px;top:678px;width:23px;height:15px;border:1px dashed #000"></div>
<div style="left:1207px;top:683px;width:3px;height:3px;background:#d020d0"></div>
<div class="b" style="left:980px;top:771px;width:29px;height:38px"></div><svg style="left:980px;top:775px" width="29" height="31"><use href="#del"/></svg>
<div class="b" style="left:1014px;top:771px;width:29px;height:38px"></div><svg style="left:1014px;top:775px" width="29" height="31"><use href="#ref"/></svg>
<div class="f" style="left:1045px;top:769px;width:307px;height:42px;border:1px solid #000"></div>
<div class="m" style="left:1049px;top:782px">150 measurements for 2 layers</div>
<div class="b" style="left:1354px;top:771px;width:38px;height:38px"></div>
<div class="b" style="left:1396px;top:771px;width:38px;height:38px"></div>
<svg style="left:1354px;top:771px" width="82" height="38" fill="none" stroke="#000">
<rect x="5.5" y="5.5" width="28" height="29"/><rect x="47.5" y="5.5" width="28" height="29"/>
<rect x="8" y="8" width="12" height="12" fill="#9cd9d9" stroke="#1010d0" stroke-width="2.4"/><rect x="10" y="13" width="8" height="6" fill="#d02020" stroke="none"/>
<rect x="23" y="23" width="7" height="8" stroke="#1010d0" stroke-width="2"/><path d="M20 12h8v8"/><path d="M28 23l-3-4h6z" fill="#000"/>
<rect x="50" y="8" width="12" height="12" fill="#9cd9d9" stroke="#1010d0" stroke-width="2.4"/><rect x="52" y="13" width="8" height="6" fill="#d02020" stroke="none"/>
<rect x="66" y="23" width="7" height="8" stroke="#1010d0" stroke-width="2"/><path d="M66 27h-12v-4"/><path d="M54 20l-3 4h6z" fill="#000"/>
</svg>
<div style="left:973px;top:814px;width:466px;height:1px;background:#3f8f80"></div>
<div class="f" style="left:973px;top:815px;width:467px;height:27px"></div>
<div class="b" style="left:975px;top:818px;width:464px;height:22px"></div>
<div class="m" style="left:1184px;top:821px">Close</div>

<!-- Measure popup -->
<div style="left:1253px;top:242px;width:187px;height:247px;background:#d4d0c8;border:1px solid #f0eee8;border-bottom-color:#777;border-right:0"></div>
<div class="bar" style="left:1256px;top:245px;width:184px;height:18px"></div>
<svg style="left:1258px;top:248px" width="16" height="15"><use href="#wi"/></svg>
<div class="w" style="left:1275px;top:247px">Measure Popup</div>
<div class="x" style="left:1422px;top:247px">✕</div>
<div class="g" style="left:1256px;top:263px;width:184px;height:223px"></div>
<div class="f" style="left:1257px;top:264px;width:181px;height:16px"></div>
<div class="m" style="left:1293px;top:265px">Measure Mode</div>
<div class="mr" style="top:280px"></div>
<div class="mr" style="top:309px"></div>
<div class="mr" style="top:338px"></div>
<div class="mr" style="top:367px"></div>
<div class="mr" style="top:396px;height:29px"></div>
<div class="d" style="left:1265px;top:289px"></div><div class="m" style="left:1281px;top:287px">Between Points</div>
<div class="d on" style="left:1265px;top:318px"></div><div class="m" style="left:1281px;top:316px">Between Contours</div>
<div class="d" style="left:1265px;top:347px"></div><div class="m" style="left:1281px;top:345px">Between Nets</div>
<div class="d" style="left:1265px;top:376px"></div><div class="m" style="left:1281px;top:374px">Annular Ring</div>
<div class="d" style="left:1265px;top:405px"></div><div class="m" style="left:1281px;top:403px">Between Midpoints</div>
<div class="f" style="left:1256px;top:457px;width:184px;height:29px;border-top:1px solid #3f8578"></div>
<div class="b" style="left:1258px;top:460px;width:178px;height:24px"></div>
<div class="m" style="left:1325px;top:464px">Close</div>
</body></html>
